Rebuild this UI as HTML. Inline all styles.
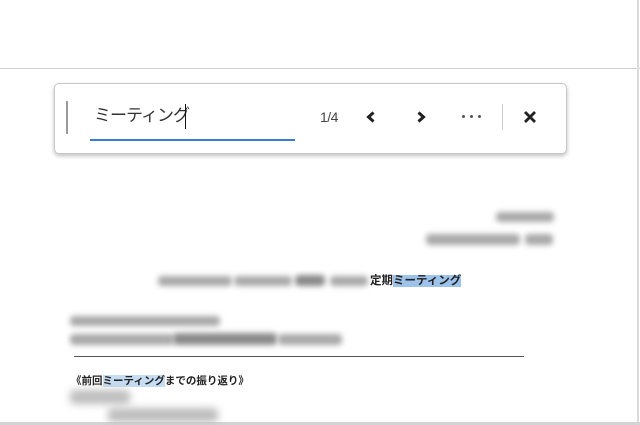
<!DOCTYPE html>
<html><head><meta charset="utf-8"><style>
html,body{margin:0;padding:0;width:640px;height:425px;overflow:hidden;background:#fff;font-family:"Liberation Sans","Noto Sans CJK JP",sans-serif}
.abs{position:absolute}
.b{position:absolute;background:#a8a8a8;filter:blur(3px);border-radius:4px}
.hl{background:#9ec3ea}
</style></head><body>
<div class="abs" style="left:0;top:68px;width:640px;height:1px;background:#d0d0d0"></div>
<div class="abs" style="left:637px;top:0;width:2px;height:425px;background:#dcdcdc"></div>
<div class="abs" style="left:0;top:422px;width:640px;height:3px;background:#d4d4d4"></div>

<div class="abs" style="left:54px;top:83px;width:511px;height:69px;border:1px solid #c8c8c8;border-radius:5px;background:#fff;box-shadow:0 2px 4px rgba(0,0,0,.25)"></div>
<div class="abs" style="left:66px;top:101px;width:2px;height:33px;background:#9a9a9a"></div>
<div class="abs" style="left:94px;top:104px;font-size:17px;color:#333;line-height:24px;letter-spacing:-1px">ミーティング</div>
<div class="abs" style="left:185px;top:104px;width:1px;height:25px;background:#111"></div>
<div class="abs" style="left:90px;top:139px;width:205px;height:2px;background:#3a7bd5"></div>
<div class="abs" style="left:320px;top:109px;font-size:14px;color:#444;letter-spacing:-0.5px">1/4</div>
<svg class="abs" style="left:364px;top:110px" width="14" height="14"><path d="M9.5 2.5 L4.5 7 L9.5 11.5" fill="none" stroke="#222" stroke-width="3"/></svg>
<svg class="abs" style="left:414px;top:110px" width="14" height="14"><path d="M4.5 2.5 L9.5 7 L4.5 11.5" fill="none" stroke="#222" stroke-width="3"/></svg>
<div class="abs" style="left:462px;top:115px;width:20px;height:4px">
<span class="abs" style="left:0;top:0;width:3px;height:3px;background:#555;border-radius:50%"></span>
<span class="abs" style="left:8px;top:0;width:3px;height:3px;background:#555;border-radius:50%"></span>
<span class="abs" style="left:16px;top:0;width:3px;height:3px;background:#555;border-radius:50%"></span></div>
<div class="abs" style="left:502px;top:104px;width:1px;height:26px;background:#ccc"></div>
<svg class="abs" style="left:523px;top:110px" width="14" height="14"><path d="M2 2 L12 12 M12 2 L2 12" stroke="#222" stroke-width="2.8"/></svg>

<div class="b" style="left:496px;top:212px;width:58px;height:10px"></div>
<div class="b" style="left:426px;top:234px;width:94px;height:11px"></div>
<div class="b" style="left:525px;top:234px;width:28px;height:11px"></div>
<div class="b" style="left:158px;top:276px;width:74px;height:10px"></div>
<div class="b" style="left:234px;top:276px;width:58px;height:10px"></div>
<div class="b" style="left:295px;top:275px;width:30px;height:11px;background:#888"></div>
<div class="b" style="left:330px;top:276px;width:38px;height:10px"></div>
<div class="abs" style="left:370px;top:273px;font-size:11.5px;font-weight:bold;color:#222;line-height:16px;white-space:nowrap">定期<span class="hl">ミーティング</span></div>
<div class="b" style="left:70px;top:316px;width:150px;height:10px"></div>
<div class="b" style="left:70px;top:334px;width:104px;height:11px"></div>
<div class="b" style="left:173px;top:333px;width:104px;height:12px;background:#8a8a8a"></div>
<div class="b" style="left:278px;top:334px;width:64px;height:11px"></div>
<div class="abs" style="left:74px;top:356px;width:450px;height:1px;background:#555"></div>
<div class="abs" style="left:71px;top:374px;font-size:10.5px;font-weight:bold;color:#222;line-height:15px;white-space:nowrap">《前回<span class="hl" style="background:#c5dcf2">ミーティング</span>までの振り返り》</div>
<div class="b" style="left:70px;top:390px;width:60px;height:14px;background:#bdbdbd;filter:blur(4px)"></div>
<div class="b" style="left:108px;top:408px;width:110px;height:14px;background:#bdbdbd;filter:blur(4px)"></div>
</body></html>
